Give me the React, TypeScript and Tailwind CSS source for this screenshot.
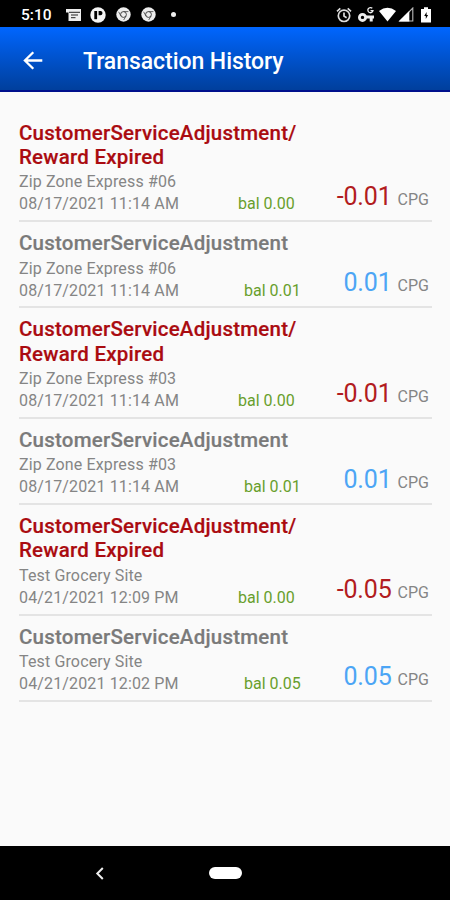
import React from "react";

type Entry = { title: string[]; site: string; date: string; bal: string; amount: string; debit: boolean };

const service = "CustomerServiceAdjustment";
const entries: Entry[] = [
  { title: [service + "/", "Reward Expired"], site: "Zip Zone Express #06", date: "08/17/2021 11:14 AM", bal: "bal 0.00", amount: "-0.01", debit: true },
  { title: [service], site: "Zip Zone Express #06", date: "08/17/2021 11:14 AM", bal: "bal 0.01", amount: "0.01", debit: false },
  { title: [service + "/", "Reward Expired"], site: "Zip Zone Express #03", date: "08/17/2021 11:14 AM", bal: "bal 0.00", amount: "-0.01", debit: true },
  { title: [service], site: "Zip Zone Express #03", date: "08/17/2021 11:14 AM", bal: "bal 0.01", amount: "0.01", debit: false },
  { title: [service + "/", "Reward Expired"], site: "Test Grocery Site", date: "04/21/2021 12:09 PM", bal: "bal 0.00", amount: "-0.05", debit: true },
  { title: [service], site: "Test Grocery Site", date: "04/21/2021 12:02 PM", bal: "bal 0.05", amount: "0.05", debit: false },
];

function ChromeIcon() {
  return (
    <svg width="15" height="15" viewBox="0 0 15 15">
      <circle cx="7.5" cy="7.5" r="7.2" fill="#ededed" />
      <circle cx="7.5" cy="7.5" r="2.9" fill="none" stroke="#333" strokeWidth="0.9" />
      <path d="M7.5 4.6H12.4M5 9L2.6 4.8M10 9L7.7 13" stroke="#444" strokeWidth="0.8" />
    </svg>
  );
}

function StatusBar() {
  return (
    <div className="flex h-[27px] shrink-0 items-center bg-black pr-[19px] pl-[21px] pt-[2px] text-white">
      <span className="w-[45px] pt-px text-[15.5px] leading-[20px] font-medium">5:10</span>
      <svg width="15" height="14" viewBox="0 0 15 14">
        <path d="M0 1h15v12H2.5V4.5H0z" fill="#eee" />
        <path d="M3 4.3h11M5 7h7M5 9.7h4.5" stroke="#222" strokeWidth="1" />
      </svg>
      <svg className="ml-[9px]" width="16" height="16" viewBox="0 0 16 16">
        <circle cx="8" cy="8" r="7.7" fill="#f4f4f4" />
        <path d="M4.3 4h2.8v8.2H4.3z" fill="#000" />
        <path d="M8.6 4h2.2q1.9.4 1.7 2.2-.2 2-2 2H8.6z" fill="#000" />
      </svg>
      <div className="ml-[10px] flex gap-[10px]"><ChromeIcon /><ChromeIcon /></div>
      <div className="ml-[15px] size-[5px] rounded-full bg-[#eee]" />
      <div className="ml-auto flex items-center">
        <svg width="16" height="16" viewBox="0 0 16 16" fill="none" stroke="#ddd" strokeWidth="1.7">
          <circle cx="8" cy="8.8" r="5.7" />
          <path d="M1 4.3L4.3 1.4M15 4.3l-3.3-2.9M8 5.5v3.6l2.6 1.7" />
        </svg>
        <svg className="ml-[6px]" width="17" height="17" viewBox="0 0 17 17" fill="none" stroke="#eee">
          <circle cx="4.5" cy="11.4" r="3.1" strokeWidth="2.8" />
          <path d="M7.5 11h8.5M13.2 11v4.6" strokeWidth="3" />
          <path d="M14.3 2.3A2.6 2.6 0 1 0 15 4.7h-2.5" strokeWidth="1.3" />
        </svg>
        <svg className="ml-[4px]" width="17" height="15" viewBox="0 0 18 15"><path d="M0 3.8Q9-3 18 3.8L9 14.8z" fill="#fff" /></svg>
        <svg className="ml-[2px]" width="16" height="15" viewBox="0 0 16 15">
          <path d="M14.8 1v13H2z" fill="none" stroke="#bbb" strokeWidth="1.1" />
          <path d="M.5 14.6L11.3 4v10.6z" fill="#fff" />
        </svg>
        <svg className="ml-[7px]" width="10" height="16" viewBox="0 0 10 16">
          <path d="M0 2h3V.3h4V2h3v13.6H0z" fill="#fff" />
          <path d="M5.6 5L3.2 9h1.6v3l2.3-4H5.6z" fill="#000" />
        </svg>
      </div>
    </div>
  );
}

function Row({ e }: { e: Entry }) {
  return (
    <li className={"flex flex-col border-b-2 border-[#e4e4e4] pt-[8.9px] " + (e.debit ? "h-[110.5px]" : "h-[86.2px]")}>
      <h2 className={"text-[20.5px] leading-[24.2px] font-medium tracking-[0.22px] whitespace-nowrap " + (e.debit ? "text-[#aa0b10] [-webkit-text-stroke:0.2px_#aa0b10]" : "text-[#7a7a7a] [-webkit-text-stroke:0.2px_#7a7a7a]")}>
        {e.title.map((t) => <span key={t} className="block">{t}</span>)}
      </h2>
      <div className="flex text-[16px] leading-[22px] whitespace-nowrap text-[#858585]">
        <div className="pt-[2.2px] tracking-[0.14px]">
          <p>{e.site}</p>
          <p>{e.date}</p>
        </div>
        <div className={"ml-auto flex pt-[24.2px] text-[#689f2c] " + (e.debit ? "w-[194px]" : "w-[188px]")}>
          <span>{e.bal}</span>
        </div>
        <div className="-ml-[100px] flex w-[100px] items-baseline justify-end gap-[6px] pt-[15px] pr-[3px]">
          <span className={"text-[25px] leading-[26px] tracking-[-0.15px] " + (e.debit ? "text-[#b21c20]" : "text-[#4ca5f5]")}>{e.amount}</span>
          <span>CPG</span>
        </div>
      </div>
    </li>
  );
}

export default function App() {
  return (
    <div className="flex h-[900px] w-[450px] flex-col overflow-hidden bg-[#fafafa] font-['Roboto',sans-serif]">
      <StatusBar />
      <header className="flex h-[65px] shrink-0 items-center border-b-2 border-[#00108c] bg-linear-to-b from-[#0066ff] to-[#003f9c] pt-[5px] pl-[23px] text-white">
        <svg width="20" height="20" viewBox="0 0 20 20" fill="none" stroke="#fff" strokeWidth="2.3">
          <path d="M19.3 9.5H2M10.3 1.2L1.9 9.5l8.4 8.3" />
        </svg>
        <h1 className="ml-[40px] pt-[2px] text-[23px] leading-[28px] font-medium tracking-[-0.05px] whitespace-nowrap">Transaction History</h1>
      </header>
      <main className="grow pt-[19.8px] pr-[18px] pl-[19px]">
        <ul>{entries.map((e, i) => <Row key={i} e={e} />)}</ul>
      </main>
      <nav className="flex h-[54px] shrink-0 items-center bg-black pl-[95px]">
        <svg width="9" height="13" viewBox="0 0 9 13" fill="none" stroke="#eee" strokeWidth="2"><path d="M7.8 1L2.3 6.5l5.5 5.5" /></svg>
        <div className="ml-[105px] h-[12.5px] w-[33px] rounded-full bg-white" />
      </nav>
    </div>
  );
}
